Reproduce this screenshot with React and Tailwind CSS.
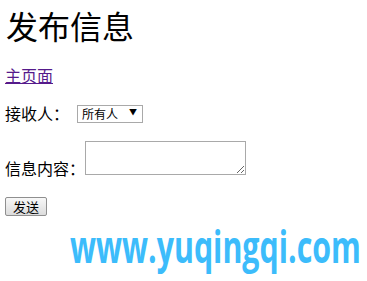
export default function App() {
  return (
    <div
      className="relative w-[367px] h-[281px] overflow-hidden bg-white text-black"
      style={{ fontFamily: '"Noto Sans CJK SC", "Noto Sans", sans-serif' }}
    >
      <div className="flex flex-col items-start pl-[5px]">
        {/* Heading */}
        <h1 className="pl-[1px] pt-[7px] text-[32px] leading-[37px] font-normal">发布信息</h1>

        {/* Link */}
        <a href="#" className="mt-[22px] text-[16px] leading-[18px] text-[#551a8b] underline">
          主页面
        </a>

        {/* Receiver row */}
        <div className="mt-[20px] flex h-[18px] items-center text-[16px] leading-[18px]">
          <span>接收人：</span>
          <div className="relative ml-[8px]">
            <select className="h-[18px] w-[66px] appearance-none rounded-none border border-[#a9a9a9] bg-white pl-[4px] text-[12px] leading-[16px] outline-none">
              <option>所有人</option>
            </select>
            <span className="pointer-events-none absolute right-[6px] top-[4px] text-[8px] leading-[10px]">▼</span>
          </div>
        </div>

        {/* Message row */}
        <div className="mt-[19px] flex items-end">
          <span className="mb-[-1px] text-[16px] leading-[16px]">信息内容：</span>
          <textarea className="h-[34px] w-[161px] border border-[#a9a9a9] bg-white text-[13px] outline-none" />
        </div>

        {/* Submit */}
        <button className="mt-[22px] h-[19px] w-[42px] rounded-[2px] border border-[#8f8f8f] bg-gradient-to-b from-[#f8f8f8] to-[#dcdcdc] text-[13px] leading-[17px]">
          发送
        </button>
      </div>

      {/* Watermark */}
      <div
        className="pointer-events-none absolute left-[70px] top-[223px] origin-left scale-x-[0.675] whitespace-nowrap text-[45px] font-bold leading-[45px] text-[#3cbcfb]"
        style={{ fontFamily: '"Open Sans", sans-serif' }}
      >
        www.yuqingqi.com
      </div>
    </div>
  );
}
